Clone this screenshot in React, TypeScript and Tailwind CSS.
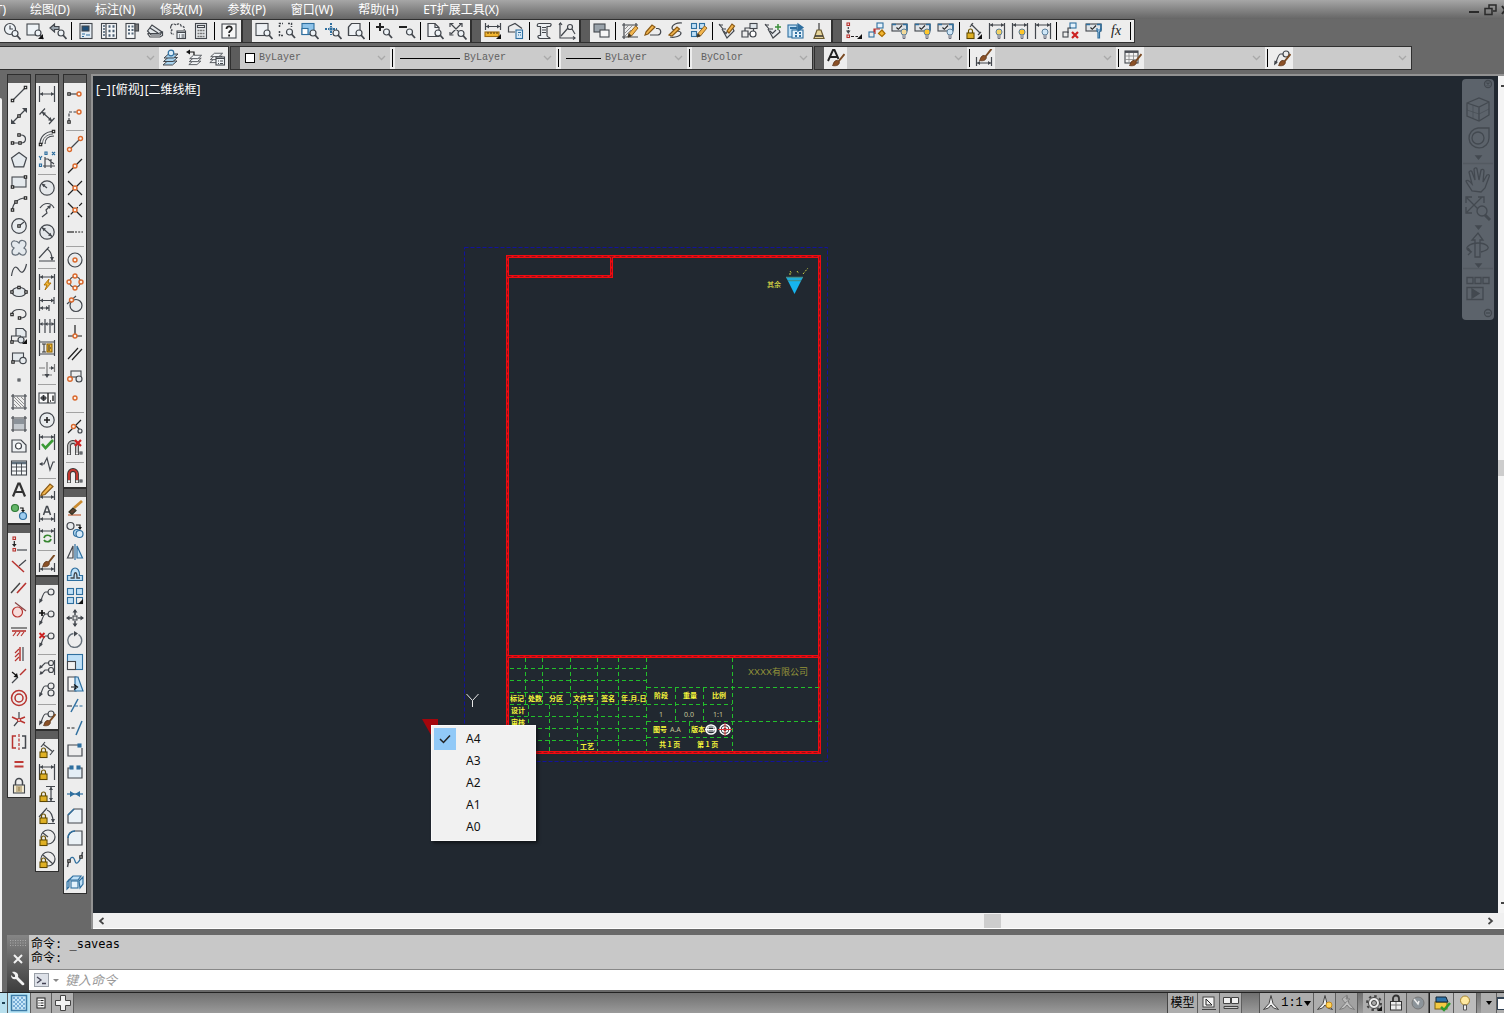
import type { ReactNode } from 'react';

const K = '#43474d';
const B = '#2f6f9f';
const L = '#bfe0f7';
const O = '#d9682c';
const RD = '#b8332f';
const Y = '#f2b632';

type Tone = { s?: string; f?: string; w?: number; dash?: string };

const P = ({ d, s = K, f = 'none', w = 1.2, dash }: Tone & { d: string }) => (
  <path d={d} stroke={s} fill={f} strokeWidth={w} strokeDasharray={dash} />
);
const C = ({ x, y, r, s = K, f = 'none', w = 1.2 }: Tone & { x: number; y: number; r: number }) => (
  <circle cx={x} cy={y} r={r} stroke={s} fill={f} strokeWidth={w} />
);
const R = ({ x, y, w, h, s = K, f = 'none' }: { x: number; y: number; w: number; h: number; s?: string; f?: string }) => (
  <rect x={x} y={y} width={w} height={h} stroke={s} fill={f} strokeWidth={1.1} />
);
const N = ({ x, y }: { x: number; y: number }) => <R x={x - 1.2} y={y - 1.2} w={2.4} h={2.4} s="#222" f="#eee" />;
const Ring = ({ x, y, r = 2 }: { x: number; y: number; r?: number }) => <C x={x} y={y} r={r} s={O} f="#fdeee4" w={1.4} />;
const Mag = ({ x = 12, y = 11 }: { x?: number; y?: number }) => (
  <>
    <C x={x} y={y} r={3} f="#eef3f7" />
    <P d={`M${x + 2} ${y + 2}l3.5 4`} w={1.8} />
  </>
);
const Corner = () => <P d="M17 12v5h-5z" s="none" f="#111" />;
const Pencil = () => (
  <>
    <P d="M7 15l1-3.5L14.5 4l2.5 2-6.5 8z" s="#8a5a16" f="#f3b64e" w={0.9} />
    <P d="M7 15l1-3.5 2.3 2.4z" s="#333" f="#333" w={0.6} />
  </>
);
const Brush = ({ x = 0, y = 0 }: { x?: number; y?: number }) => (
  <g transform={`translate(${x} ${y})`}>
    <P d="M10.5 11.5L16.5 4" s="#7a4a22" w={2} />
    <P d="M4.500 15.500c1-1 .8-4 3.500-5 1.500-.5 3.800.8 3.300 2.500-.8 3-4.500 3-6.800 2.500z" s="#5a3216" f="#8b5127" w={0.8} />
  </g>
);
const Bulb = ({ f = '#cfe6f7', x = 12 }: { f?: string; x?: number }) => (
  <>
    <C x={x} y={10} r={3} s="#5b7f9c" f={f} w={1} />
    <P d={`M${x - 1} 13v3.500h2V13`} s="#556" f="#cdd6dd" w={0.8} />
  </>
);
const Lock = () => (
  <>
    <P d="M3.500 11V9a2 2 0 0 1 4 0v2" s="#6b5200" />
    <R x={2} y={11} w={7} h={5.500} s="#5d4700" f="#f4c52e" />
    <P d="M3 13h5M3 15h5" s="#b98a12" w={0.7} />
  </>
);
const Dim = ({ y = 4 }: { y?: number }) => (
  <>
    <P d={`M1.500 1v16M16.500 1v16M2 ${y}h14`} />
    <P d={`M2 ${y}l3-2v4zM16 ${y}l-3-2v4z`} s="none" f={K} />
  </>
);
const DimLow = () => (
  <>
    <P d="M1.500 8v9M16.500 8v9M2 14h14" />
    <P d="M2 14l3-2v4zM16 14l-3-2v4z" s="none" f={K} />
  </>
);
const Panel = () => (
  <>
    <R x={1} y={2} w={15} h={7} f="#dfe3e7" />
    <P d="M1 2.500h4M12 2.500h4v6" s={B} w={1.500} />
    <P d="M5.500 5.500l1.800 1.800L11 3.500" s="#222" w={1.100} />
  </>
);
const Magnet = ({ c }: { c: string }) => (
  <>
    <P d="M3 16V7a4 4 0 0 1 8 0v9" s="#333" w={3.800} />
    <P d="M3 13V7a4 4 0 0 1 8 0v6" s={c} w={2.200} />
    <P d="M3 15.500v-2.200M11 15.500v-2.200" s="#eee" w={2.200} />
    <R x={14} y={13} w={2} h={2} />
  </>
);
const Leader = () => (
  <>
    <C x={13} y={5} r={3} />
    <P d="M10 5H7.500c-2 0-3 4-5 10" />
    <P d="M1 16.500l.5-5 3.500 1.500z" s="none" f={K} />
  </>
);
const Sheets = ({ c = '#f3f5f7' }: { c?: string }) => (
  <>
    <P d="M1 16l4.500-4H15l-4.500 4z" f={c} w={1} />
    <P d="M1.500 12.500L6 8.500h9.500L11 12.500z" f={c} w={1} />
    <P d="M2 9l4.500-4H16l-4.500 4z" f={c} w={1} />
  </>
);

const icons: Record<string, ReactNode> = {
  'Zoom realtime': <><C x={7} y={7} r={5.500} f="#eef3f7" /><P d="M7 3.500V7H10" /><Mag x={12} y={11.500} /></>,
  'Zoom flyout': <><R x={1} y={2} w={12} h={11} f="#eef3f7" /><Mag /><Corner /></>,
  'Zoom previous': <><P d="M1 6l4.500-4v2.500H10v3H5.500V10z" f="#9aa4ad" /><Mag x={12} y={11} /></>,
  Properties: <><R x={3} y={1.500} w={12} h={15} f="#e4ecf3" /><R x={5} y={4} w={7} h={5} f="#1e4e79" /><P d="M5 12h3M5 14.500h2M9 13h4" s={B} /></>,
  'Design center': <><R x={1.500} y={1.500} w={15} h={15} f="#f5f7f9" /><P d="M6 2v15" /><P d="M3 4h2M3 7h2M3 10h2M3 13h2" w={1.600} s="#4a5f73" /><P d="M8.500 4.500h2M12.500 4.500h2M8.500 9h2M12.500 9h2M8.500 13.500h2M12.500 13.500h2" w={2.400} s="#4a5f73" /></>,
  'Tool palettes': <><R x={3} y={1.500} w={9} h={15} f="#f5f7f9" /><R x={12} y={2} w={3.500} h={7} f="#777" /><P d="M5 4.500h2M8.500 4.500h2M5 8h2M8.500 8h2M5 11.500h2M8.500 11.500h2" w={1.800} s="#56697a" /></>,
  'Sheet set manager': <><P d="M1.500 9L6 3l10 7-2 3H5z" f="#e3e7ea" /><P d="M1.500 11.500h11L16.500 10v3.500L14 15H4l-2.500-3.500M4 6l8 5" /></>,
  'Markup set': <><P d="M2 4c1-3 4-2 5-1 2-2 5-1 5 1 3 0 4 2 3 4M2 4c-1 2 0 3 1 4-2 2-1 5 2 4" dash="2.500 1" /><R x={8} y={9} w={8.500} h={7.500} f="#eef3f7" /><P d="M8 10.500h8.500M10 13h1M12.500 13h3M10 15h1M12.500 15h3" /></>,
  Calculator: <><R x={3.500} y={1.500} w={11} h={15} f="#e4e7ea" /><R x={5.500} y={3.500} w={7} h={2} f="#fff" /><P d="M5.500 8.500h2M8 8.500h2M10.500 8.500h2M5.500 11.500h2M8 11.500h2M10.500 11.500h2M5.500 14.500h2M8 14.500h2M10.500 14.500h2" w={1.600} s="#777" /></>,
  Help: <><R x={2} y={2} w={14} h={14} f="#f7f7f7" /><P d="M6.500 7c0-3.500 5.500-3.500 5.300 0-.2 2-2.700 1.700-2.700 4M9.100 12.500v2" s="#222" w={1.800} /></>,
  'Zoom window': <><R x={1} y={1.500} w={12} h={12} f="#eef1f4" /><Mag /></>,
  'Zoom dynamic': <><P d="M1.500 5V1.500H5M10 1.500h3.500V5M1.500 9v4.500H5" w={1.500} dash="2 1" /><Mag x={11.500} y={10} /></>,
  'Zoom scale': <><R x={1} y={1.500} w={12} h={11} s={B} f="#8fc4ea" /><R x={1} y={6.500} w={6} h={6} s={B} f="#fff" /><Mag /></>,
  'Zoom center': <><P d="M7 1v4M7 9v4M1 7h4M9 7h4" s={B} w={2} dash="2 1" /><R x={6} y={6} w={2} h={2} s={B} f={B} /><Mag x={12} y={11} /></>,
  'Zoom object': <><P d="M1.500 5l3-3.500h8.500v8l-3 4H1.500z" f="#eef1f4" /><P d="M1.500 5v8.500" /><Mag /></>,
  'Zoom in': <><P d="M1 5h8M5 1v8" s="#222" w={2} /><Mag x={11.500} y={10} /></>,
  'Zoom out': <><P d="M1 5h8" s="#222" w={2} /><Mag x={11.500} y={10} /></>,
  'Zoom all': <><P d="M2 1.500h7l4 4v9H2z" f="#f1f3f5" /><P d="M9 1.500v4h4" /><Mag /></>,
  'Zoom extents': <><P d="M2 2l10 10M12 2L2 12M1 5V1.500h3.500M10 1.500h3V5M1 10v3h3.500" /><Mag x={12} y={11.500} /></>,
  Distance: <><P d="M1.500 1v7M16.500 1v7M2 4.500h14" /><P d="M2 4.500l3-2v4zM16 4.500l-3-2v4z" s="none" f={K} /><R x={1} y={10} w={14} h={4.500} s="#9b6a10" f={Y} /><P d="M4 10v2M7 10v2M10 10v2M13 10v2" s="#6b4a0c" /><Corner /></>,
  Area: <><P d="M1.500 4.500L8 1.500l7 5M1.500 4.500V10H8" /><R x={9} y={8} w={6.500} h={8.500} s={B} f="#d9ebf8" /><P d="M11 10.500h3M11 13h1M13 13h1" s={B} /></>,
  List: <><P d="M4 1.500h11c2 0 1 3-.5 3H12v9c0 2 3 1.500 3 3H5c-2 0-3-3-1-3h1.500V4.500H3.500C1.500 4.500 2 1.500 4 1.500z" f="#eceff2" /><P d="M7 5.500h4M7 8h4M7 10.500h4" /></>,
  'Locate point': <><P d="M2 1v15h15" /><P d="M1 3l1.500-2L4 3M15 14.500l2 1.500-2 1.500M3 14l7-8" /><C x={12} y={5} r={2.500} /><P d="M14 7l3 5" /></>,
  'Draw order': <><R x={1} y={2} w={11} h={8} f="#9aa3ab" /><R x={7} y={8} w={9} h={7} f="#f7f7f7" /></>,
  'Edit hatch': <><P d="M3 1v16M1 3h16M1 15h16M15 1v4" /><P d="M4 7l4-4M4 11l8-8M4 14l6-6" w={0.900} s="#888" /><Pencil /></>,
  'Edit polyline': <><P d="M2 10l6-7 3 2-7 7-3 1z" s="#8a5a16" f="#f3b64e" /><P d="M6 13h8a3.300 3.300 0 0 0 0-6.500h-2" /></>,
  'Edit spline': <><P d="M15 1c-5-.5-10 1.500-10 5s9 2 9 5-6 5-11 4" /><P d="M2 13l8-8 2.500 2-7.500 7z" s="#8a5a16" f="#f3b64e" /></>,
  'Edit array': <><R x={1.500} y={1.500} w={5} h={5} s={B} f={L} /><R x={9.500} y={1.500} w={5} h={5} s={B} f={L} /><R x={1.500} y={9.500} w={5} h={5} s={B} f={L} /><Pencil /></>,
  'Edit attribute': <><P d="M1 3h4M4 7l5 9 7-7-2-4" f="#e8ebee" /><P d="M1 2l4 5h3M5.500 9l2.500 2.500L11 7" /><P d="M9 9l5-7 2.500 2-5.500 7z" s="#8a5a16" f="#f3b64e" /></>,
  'Block editor': <><R x={9} y={1.500} w={7} h={5} f="#dfe5ea" /><P d="M1 9h6v6H1zM4 9V6h5" /><C x={12} y={12} r={3} f="#fff" /><P d="M7 12h2M12.500 6.500V9" /></>,
  'Synchronize attributes': <><P d="M1 3h4M4 7l5 9 7-6-1-2" f="#e8ebee" /><P d="M1 2l4 5h4M6 9l2.500 2.500L12 8" /><P d="M14 2v6M11 5h6" s="#3a8f3a" w={1.500} /></>,
  'Data extraction': <><R x={1} y={3} w={9} h={12} s={B} f={L} /><R x={5} y={8} w={11} h={8} s={B} f="#e5f2fc" /><P d="M3 6h7M8 11h2M12 11h2M8 14h2M12 14h2" s={B} w={1.800} /><P d="M11 2l5 3.500-5 3.500z" s={B} f={B} /></>,
  Purge: <><P d="M9 1v7" s="#777" w={1.800} /><P d="M7 8h4l3 8.500H4z" s="#6a5a30" f="#e6d49a" /><P d="M5 14h8" s="#333" w={1.500} /></>,
  'Geometric constraint': <><R x={2} y={1} w={2.500} h={2.500} s={RD} /><P d="M3.300 5v6" dash="2 1" /><P d="M1 8.500h4.500L3.300 12z" s="none" f={K} /><R x={2} y={13} w={2.500} h={2.500} s={RD} /><P d="M6 14.500h7" dash="3 1.500" s="#222" /><Corner /></>,
  'Auto constrain': <><R x={9} y={1} w={6} h={5} s={B} f="#e5f2fc" /><R x={1} y={10} w={5} h={5} s={B} /><P d="M6 10V7h6M7 12V7" s={RD} /><P d="M14 8l3 3.500-3 3-3.500-3z" s="#a86c00" f={Y} /></>,
  'Show geometric': <><Panel /><Bulb f="#f2d99a" x={13} /></>,
  'Show all geometric': <><Panel /><Bulb f="#ffc62b" x={13} /></>,
  'Hide all geometric': <><Panel /><Bulb x={13} /></>,
  'Aligned constraint': <><Lock /><P d="M6 2l9 9M5 5l3-4M13 13l3-3" /><Corner /></>,
  'Show dimensional': <><Dim y={3} /><Bulb f="#f2d264" x={11} /></>,
  'Show all dimensional': <><Dim y={3} /><Bulb f="#ffc62b" x={11} /></>,
  'Hide all dimensional': <><Dim y={3} /><Bulb x={11} /></>,
  'Delete constraints': <><R x={8} y={1} w={6} h={5} s={B} f="#e5f2fc" /><R x={1} y={10} w={5} h={5} /><P d="M6 11V6h3" /><P d="M10 10l6 6M16 10l-6 6" s="#c22" w={2.200} /></>,
  'Constraint settings': <><Panel /><P d="M12 6v3l1 1v6h1.500v-6l1-1V6M12 8h3.500" s={B} f="#e5f2fc" /></>,
  'Parameters manager': <text x="3" y="13" fontSize="14" fontStyle="italic" fontFamily="Liberation Serif, serif" fill="#222">fx</text>,
  'Layer properties': <><Sheets c="#a9d3ee" /><C x={9} y={4} r={2.800} s={B} f="#dceefa" /></>,
  'Layer previous': <><g transform="translate(3 2) scale(.85)"><Sheets /></g><P d="M9 6V3H3" s="#111" /><P d="M1 3l4-2.500v5z" s="none" f="#111" /></>,
  'Layer states': <><g transform="translate(1 0) scale(.85)"><Sheets /></g><R x={8} y={8} w={8.500} h={8} f="#f1f5f8" /><P d="M8 9.500h8.500M10 12h1M12 12h3M10 14.500h1M12 14.500h3" /></>,
  'Text style': <><P d="M1 12L6 1h1.500l4 9M3 8h7" s="#222" w={1.900} /><Brush x={1} y={1} /></>,
  'Dimension style': <><DimLow /><Brush x={0} y={-4} /></>,
  'Table style': <><R x={1} y={2} w={13} h={12} f="#f4f4f4" /><P d="M1 3h13" w={1.800} /><P d="M1 7h13M1 10.500h13M5 4v10M9.500 4v10" w={0.800} s="#888" /><Brush x={1} y={1} /></>,
  'Multileader style': <><Leader /><Brush x={1} y={1} /></>,

  Line: <><P d="M2 16L16 2" /><N x={2.500} y={15.500} /><N x={15.500} y={2.500} /></>,
  'Construction line': <><P d="M2 16L16 2" /><P d="M1 17v-5l5 5zM17 1v5l-5-5z" s="none" f={K} /><N x={9} y={9} /></>,
  Polyline: <><P d="M2 14h9c6 0 6-8 0-8H9" /><N x={2.500} y={14} /><N x={10} y={14} /><N x={9} y={6} /></>,
  Polygon: <P d="M9 1.500l7.500 5.500-2.800 8.800H4.300L1.500 7z" f="#e4e9ed" />,
  Rectangle: <><R x={2} y={4} w={14} h={10} f="#e4e9ed" /><N x={2.500} y={14} /><N x={15.500} y={4} /></>,
  Arc: <><P d="M2.500 15c0-6 5-12 13-12" /><N x={2.500} y={15} /><N x={6} y={7} /><N x={15.500} y={3} /></>,
  Circle: <><C x={9} y={9} r={7.300} f="#e8ecef" /><P d="M9 9l5-4" /><N x={9} y={9} /></>,
  'Revision cloud': <P d="M9 4c1-4 7-3 7 1 0 2-1 3-2 4 4 2 2 8-2 7-1 0-2-1-3-2-1 3-7 3-7-1 0-2 1-3 2-4C0 7 1 1 5 2c2 0 3 1 4 2z" f="#e4e9ed" s="#66707a" />,
  Spline: <P d="M1.500 15C3 5 6 4 9 9s6 1 7.500-6" />,
  Ellipse: <><ellipse cx="9" cy="9" rx="7" ry="4.500" stroke={K} fill="#e4e9ed" strokeWidth="1.200" /><N x={2} y={9} /><N x={16} y={9} /><N x={9} y={4.500} /></>,
  'Elliptical arc': <><P d="M2 9c1-6 14-6 14 0 0 3-3 4-6 4" /><N x={2} y={9.500} /><N x={9.500} y={13} /></>,
  'Insert block': <><P d="M6 1.500h7l3 3V10H6z" f="#e4e9ed" /><R x={1.500} y={9} w={9} h={5} f="#eee" /><C x={11} y={13} r={3} f="#dfe5ea" /><N x={2} y={15} /><Corner /></>,
  'Make block': <><R x={2.500} y={4} w={11} h={8} f="#e4e9ed" /><C x={13} y={11.500} r={3.200} f="#e8ecef" /><N x={3} y={13} /></>,
  Point: <R x={8} y={8} w={2} h={2} />,
  Hatch: <><P d="M3 1v16M15 1v16M1 3h16M1 15h16" /><P d="M4 7l7 7M4 4l10 10M7 4l7 7M11 4l3 3M4 11l3 3" w={0.800} s="#777" /></>,
  Gradient: <><P d="M4 4h10v5H4z" s="none" f="#8b9299" /><P d="M4 9h10v5H4z" s="none" f="#c4c9ce" /><P d="M3 1v16M15 1v16M1 3h16M1 15h16" /></>,
  Region: <><P d="M2 3h9l5 5v7H2z" f="#eef1f3" /><C x={8.500} y={9} r={3} f="#fff" /></>,
  Table: <><R x={1.500} y={2} w={15} h={14} f="#f6f8f9" /><P d="M2 4h14" w={2.500} s="#60707d" /><P d="M2 8h14M2 12h14M6.500 4v12M11.500 4v12" w={0.900} /></>,
  'Multiline text': <P d="M3 15.500L8.300 2.500h1.400L15 15.500M5 11h8" s="#333" w={2.200} />,
  'Add selected': <><C x={5} y={5} r={3.500} s="#2f7a35" f="#63b568" /><C x={13} y={13} r={3.500} s={B} f="#9fcdf0" /><P d="M10 5h3v3" s="#111" /><P d="M11 7h4l-2 2.500z" s="none" f="#111" /></>,
  Coincident: <><R x={3} y={2} w={2.500} h={2.500} s={RD} /><P d="M4.300 6v4" s="#222" /><P d="M2 9h4.600L4.300 12z" s="none" f="#222" /><R x={3} y={13.500} w={2.500} h={2.500} s={RD} /><P d="M7 15h10" /></>,
  Perpendicular: <><P d="M9 9l7-6" /><P d="M2 4l12 11" s={RD} w={1.500} /></>,
  Parallel: <><P d="M1 14L10 4" s="#444" w={1.400} /><P d="M7 14L16 4" s={RD} w={1.600} /></>,
  Tangent: <><C x={7.500} y={11} r={5} s={RD} f="#f7dcda" /><P d="M5 1.500L16 10" s="#844" /></>,
  Horizontal: <><P d="M1 5h16" s="#444" /><P d="M2 8h14" s={RD} w={1.600} /><P d="M6 9l-3 4M10 9l-3 4M14 9l-3 4" s={RD} /></>,
  Vertical: <><P d="M13 2v14" /><P d="M10 2v14" s={RD} w={1.500} /><P d="M9 4L5 8M9 8l-4 4M9 12l-4 4" s={RD} /></>,
  Collinear: <><P d="M10 8l6-6" s={RD} w={1.500} /><P d="M2 16l6-6" /><P d="M2 5l5 4" s="#111" /><P d="M8 10.500L3.500 10 7 6z" s="none" f="#111" /></>,
  Concentric: <><C x={9} y={9} r={7.500} s={RD} w={1.500} /><C x={9} y={9} r={4} s={RD} w={1.500} /></>,
  Fix: <><P d="M9 1v8M9 9l-5 6" /><P d="M2 6l13 6M10 8l5-2" s={RD} w={1.400} /><C x={9} y={9} r={1.500} s={RD} f="#fff" /></>,
  Symmetric: <><P d="M6 3H2.500v12H6" s={RD} w={1.500} /><P d="M9 1v16" s={RD} dash="3 1.500" /><P d="M12 3h3.500v12H12" w={1.500} /></>,
  Equal: <P d="M4.500 7h9M4.500 11.500h9" s="#bf3a36" w={2.200} />,
  'Fix lock': <><P d="M5.500 8V5a3.500 3.500 0 0 1 7 0v3" w={1.500} /><R x={3.500} y={8} w={11} h={8} f="#f3ead0" /><P d="M6 10h6M6 12h6M6 14h6M9 10v4" s="#8d7540" w={0.900} /></>,

  'Linear dimension': <Dim y={9} />,
  'Aligned dimension': <><P d="M4 5l10 9M1.500 7.500L7 1.500M11 17l5.500-6" /><P d="M4 5l4 .8L5.500 9zM14 14l-4-.8L12.500 10z" s="none" f={K} /></>,
  'Arc length': <><P d="M2 15C2 8 7 2.500 15 2.500M7 15c0-5 3-8 9-8" /><P d="M4.500 15c0-6 4-9.500 10.500-10" w={0.800} /><N x={2.500} y={15.500} /><N x={15.500} y={2.500} /></>,
  Ordinate: <><P d="M1 5l1.500 2L4 5M2.500 7v2M7 1h2v2.500H7zM14 1l3 3M17 1l-3 3M1.500 13h2v2.500h-2z" s={B} w={1.200} /><P d="M7 6v11M5 15h12M7 8h3l6 5M13 8v9" /></>,
  Radius: <><C x={9} y={9} r={7.200} f="#e4e7ea" /><P d="M4 5l5 4" /><P d="M3.500 4.500l4 1-2 2.700z" s="none" f={K} /></>,
  Jogged: <><P d="M2 7c4-6 11-6 14 0" /><P d="M4 16l5-4-1-3 4-4" /><P d="M13 4l-1 4-3-2.500z" s="none" f={K} /></>,
  Diameter: <><C x={9} y={9} r={7.200} f="#e4e7ea" /><P d="M4 4.500l10 9" /><P d="M4 4.500l4 1-2.500 2.700zM14 13.500l-4-1 2.500-2.700z" s="none" f={K} /></>,
  Angular: <><P d="M1 16h16M1 13L11 2M9 4c4 2 5 6 5 11" /><P d="M14 16l-2-4h4z" s="none" f={K} /></>,
  'Quick dimension': <><Dim y={4} /><P d="M11 6l-5 6h3l-2 5 6-7h-3z" s="#a86c00" f={Y} w={0.900} /></>,
  Baseline: <><P d="M1.500 2v14M16 2v7M11 10v6M2 5.500h14M2 13h9" /><P d="M2 5.500l3-2v4zM2 13l3-2v4zM16 5.500l-3-2v4zM11 13l-3-2v4z" s="none" f={K} /></>,
  Continue: <><P d="M1.500 2v14M7 2v14M12 2v14M16.500 2v14M2 7h14" /><P d="M2 7l2.500-2v4zM7 7l2.500-2v4zM16 7l-2.500-2v4z" s="none" f={K} /></>,
  'Dimension space': <><P d="M1.500 1v16M16.500 1v16M2 3h14M2 15h14" /><R x={9} y={5} w={5} h={8} s="#8d6200" f={Y} /><P d="M6 5v8M4 5h4M4 13h4M10 7h2M10 9h3M10 11h2" s="#333" w={1} /></>,
  'Dimension break': <><P d="M1 7h6M11 7h5M16.500 3v8M9 1v12M4 14h10" s="#777" /><P d="M9 17l-2.500-4h5zM16 7l-3-2v4z" s="none" f={K} /></>,
  Tolerance: <><R x={1} y={4} w={16} h={10} f="#fafafa" /><P d="M10 4v10M5.500 6v6M2.500 9h6M12 12h1M15 6.500V12" w={1.400} s="#222" /><C x={5.500} y={9} r={2} /></>,
  'Center mark': <><C x={9} y={9} r={7.200} f="#e8ebed" /><P d="M6 9h6M9 6v6" w={1.600} s="#222" /></>,
  Inspection: <><Dim y={4} /><P d="M4 11l3.500 4L15 7" s="#3a9a35" w={2.600} /></>,
  'Jogged linear': <><P d="M2 9h4l3-6 3 12 3-8 2 0" /><P d="M1 9l3.500-2v4z" s="none" f={K} /></>,
  'Dimension edit': <><DimLow /><P d="M4 10l8-9 3 2.500-8 8-4 1z" s="#8a5a16" f="#f3b64e" /></>,
  'Dimension text edit': <><DimLow /><P d="M5.500 10l3-8.500h1l3 8.500M6.500 7h5" w={1.500} /></>,
  'Dimension update': <><Dim y={4} /><P d="M6 11c1-4 6-3 7-1M13 12c-1 4-6 3-7 1" s="#35852e" w={1.700} /></>,
  'Dimension style manager': <><DimLow /><Brush y={-4} /></>,
  Multileader: <Leader />,
  'Add leader': <><Leader /><P d="M1 4h6M4 1v6" s="#111" w={1.700} /></>,
  'Remove leader': <><Leader /><P d="M1.500 2l5 5M6.500 2l-5 5" s="#c22" w={1.900} /></>,
  'Align leaders': <><C x={13} y={4} r={2.500} /><C x={13} y={11} r={2.500} /><P d="M16.500 1v15M10.500 4H7l-5 5M10.500 11H7l-4 4" /><P d="M1 10l1-4 3 2zM1.500 16l1-4 3 2z" s="none" f={K} /></>,
  'Collect leaders': <><C x={13} y={5} r={3} /><C x={13} y={12} r={3} /><P d="M10 5H7c-2 0-3 5-5 10" /><P d="M1 16l.5-5 3.500 2z" s="none" f={K} /></>,
  'Leader style': <><Leader /><Brush x={1} y={1} /></>,
  'Aligned lock': <><Lock /><P d="M5 3l10 8M3 6l4-5M12 14l4-5" /></>,
  'Horizontal lock': <><P d="M1.500 1v16M16.500 1v16M2 4h14" /><P d="M2 4l3-2v4zM16 4l-3-2v4z" s="none" f={K} /><Lock /></>,
  'Vertical lock': <><P d="M8 1.500h9M8 16.500h9M13 2v14" /><P d="M13 2l-2 3h4zM13 16l-2-3h4z" s="none" f={K} /><Lock /></>,
  'Angular lock': <><P d="M1 10l8-9M9 3c5 2 6 8 6 12M10 16.500h7" /><P d="M15 16l-2-4h4z" s="none" f={K} /><Lock /></>,
  'Radius lock': <><C x={10} y={8} r={7} /><P d="M5 4l5 4" /><Lock /></>,
  'Diameter lock': <><C x={10} y={8} r={7} /><P d="M5 4l10 9" /><Lock /></>,

  'Temporary tracking': <><P d="M3 9h8" /><N x={3} y={9} /><Ring x={13} y={9} /></>,
  'Snap from': <><P d="M3 14V5h8" dash="3 1.500" /><N x={3} y={15} /><Ring x={13} y={5} /></>,
  Endpoint: <><P d="M4 14L14 4" /><Ring x={3.500} y={14.500} /><Ring x={14.500} y={3.500} /></>,
  Midpoint: <><P d="M2 16L16 2" s="#222" /><Ring x={9} y={9} /></>,
  Intersection: <><P d="M2 2l14 14M16 2L2 16" s="#222" /><Ring x={9} y={9} /></>,
  'Apparent intersection': <><P d="M2 2l14 14" s="#222" /><P d="M16 2L2 16" s="#222" dash="4 2" /><Ring x={9} y={9} /></>,
  Extension: <><P d="M1 9h7" s="#222" /><P d="M9 9h8" s="#222" dash="2 1.200" /></>,
  Center: <><C x={9} y={9} r={7} f="#e8ebed" /><Ring x={9} y={9} /></>,
  Quadrant: <><C x={9} y={9} r={5.500} f="#e8ebed" /><Ring x={9} y={3} /><Ring x={9} y={15} /><Ring x={3} y={9} /><Ring x={15} y={9} /></>,
  'Tangent snap': <><C x={10} y={10.500} r={6} f="#e8ebed" /><P d="M1 9l9-8" /><Ring x={5.500} y={5} /></>,
  'Perpendicular snap': <><P d="M2 13h14M9 2v11" s="#222" /><Ring x={9} y={13} /></>,
  'Parallel snap': <P d="M2 14L12 3M6 15L16 4" s="#222" />,
  Insertion: <><R x={5} y={4} w={10} h={6} /><Ring x={4} y={12} r={2.300} /><C x={13} y={12} r={3} f="#e4e7ea" /></>,
  Node: <Ring x={9} y={9} />,
  Nearest: <><P d="M2 16L15 3M10 9l5 5" s="#222" /><Ring x={7.500} y={9.500} /><C x={14} y={14} r={2} f="#eee" /></>,
  'No snap': <><Magnet c="#bbb" /><P d="M9 1l6 6M15 1L9 7" s="#c22" w={2.200} /></>,
  'Snap settings': <Magnet c="#c3372f" />,
  Erase: <><P d="M2 16h13" s="#c56a45" w={1.300} /><P d="M8 9l8-7" s="#c98a2f" w={2.800} /><P d="M3 13l4-4 3 2.500-4 4z" s="#332" f="#5d4030" /></>,
  Copy: <><C x={4.500} y={5} r={3.500} f="#e8ebed" /><C x={11} y={12} r={3.500} s={B} f={L} /><C x={13.500} y={13} r={3.500} s={B} f="#d7ebfa" /><P d="M10 4h4v3" s="#111" /><P d="M12 6h4l-2 3z" s="none" f="#111" /></>,
  Mirror: <><P d="M7 3v12H1.500z" f="#eee" /><P d="M11 3v12h5.500z" s={B} f={L} /><P d="M9 1v16" s={B} /></>,
  Offset: <><P d="M1.500 15.500v-5H5c-1-10 9-10 8.500 0h3v5z" s={B} f={L} /><P d="M4.500 13h3.500c0-7 3-7 3 0h3" w={1.400} /></>,
  Array: <><R x={1.500} y={1.500} w={6} h={6} s={B} f={L} /><R x={10.500} y={1.500} w={6} h={6} s={B} f={L} /><R x={1.500} y={10.500} w={6} h={6} s={B} f={L} /><R x={10.500} y={10.500} w={6} h={6} s={B} /><Corner /></>,
  Move: <><R x={7} y={7} w={4} h={4} f="#ddd" /><P d="M9 1v5M9 12v5M1 9h5M12 9h5" w={1.500} /><P d="M9 0L6.500 3.500h5zM9 18l-2.500-3.500h5zM0 9l3.500-2.500v5zM18 9l-3.500-2.500v5z" s="none" f={K} /></>,
  Rotate: <><P d="M12.500 3.500a7 7 0 1 1-5-1" w={1.400} s="#66707a" /><P d="M8 0l4 2.500-4 3z" s="none" f={K} /></>,
  Scale: <><R x={1.500} y={1.500} w={15} h={15} s={B} f={L} /><R x={1.500} y={8.500} w={8} h={8} f="#f2f2f2" /></>,
  Stretch: <><P d="M2 2h8v14H2z" f="#f4f4f4" /><P d="M9 2h3l5 14H9z" s={B} f={L} /><P d="M5 12h5M8 9.500l3.500 2.500L8 14.500" s="#111" /></>,
  Trim: <><P d="M1 9h5" s={K} /><P d="M9 9h8" s={B} dash="3 1.500" /><P d="M5 15l7-13" s={B} w={1.500} /></>,
  Extend: <><P d="M1 9h9" s="#222" dash="3 1.500" /><P d="M10 16l6-14" s={B} w={1.500} /></>,
  'Break at point': <><P d="M12 4H2v11h14V7" /><R x={12} y={3} w={3} h={3} s={B} f={B} /></>,
  Break: <><P d="M4 5H2v10h14V5h-2" f="#e4eef6" /><R x={4} y={3} w={3} h={3} s={B} f={B} /><R x={11} y={3} w={3} h={3} s={B} f={B} /></>,
  Join: <><P d="M1 9h16" s={B} /><P d="M4 6l5 3-5 3zM14 6L9 9l5 3z" s="none" f={B} /></>,
  Chamfer: <><P d="M8 2h8v14H2V8z" f="#eaf1f6" /><P d="M2 8l6-6" s={B} w={1.500} /></>,
  Fillet: <><P d="M9 2h7v14H2V9c0-4 3-7 7-7z" f="#eaf1f6" /><P d="M2 9c0-4 3-7 7-7" s={B} w={1.500} /></>,
  Blend: <><P d="M3 11c2-7 5-5 6-1s4 2 6-4" s={B} /><P d="M1.500 16l1-5M15.500 6l1-5" w={1.400} /><N x={3} y={10} /><N x={15} y={6} /></>,
  Explode: <><P d="M3 7l4-4h8l-3 4zM13 8l4-4v7l-3 4z" s={B} f={L} /><R x={5} y={8} w={7} h={7} s={B} f="#e5f2fc" /><P d="M1 9l2-2v7l-2 2z" s={B} f={L} /></>,
};

const topBars: string[][] = [
  ['Zoom realtime', 'Zoom flyout', 'Zoom previous', '|', 'Properties', 'Design center', 'Tool palettes', 'Sheet set manager', 'Markup set', 'Calculator', '|', 'Help'],
  ['Zoom window', 'Zoom dynamic', 'Zoom scale', 'Zoom center', 'Zoom object', '|', 'Zoom in', 'Zoom out', '|', 'Zoom all', 'Zoom extents'],
  ['Distance', 'Area', '|', 'List', 'Locate point'],
  ['Draw order', '|', 'Edit hatch', 'Edit polyline', 'Edit spline', 'Edit array', '|', 'Edit attribute', 'Block editor', 'Synchronize attributes', 'Data extraction', 'Purge'],
  ['Geometric constraint', 'Auto constrain', 'Show geometric', 'Show all geometric', 'Hide all geometric', '|', 'Aligned constraint', 'Show dimensional', 'Show all dimensional', 'Hide all dimensional', '|', 'Delete constraints', 'Constraint settings', 'Parameters manager', '|'],
];

const palettes: string[][][] = [
  [
    ['Line', 'Construction line', 'Polyline', 'Polygon', 'Rectangle', 'Arc', 'Circle', 'Revision cloud', 'Spline', 'Ellipse', 'Elliptical arc', 'Insert block', 'Make block', 'Point', 'Hatch', 'Gradient', 'Region', 'Table', 'Multiline text', 'Add selected'],
    ['Coincident', 'Perpendicular', 'Parallel', 'Tangent', 'Horizontal', 'Vertical', 'Collinear', 'Concentric', 'Fix', 'Symmetric', 'Equal', 'Fix lock'],
  ],
  [
    ['Linear dimension', 'Aligned dimension', 'Arc length', 'Ordinate', '|', 'Radius', 'Jogged', 'Diameter', 'Angular', '|', 'Quick dimension', 'Baseline', 'Continue', 'Dimension space', 'Dimension break', '|', 'Tolerance', 'Center mark', 'Inspection', 'Jogged linear', '|', 'Dimension edit', 'Dimension text edit', 'Dimension update', '|', 'Dimension style manager'],
    ['Multileader', 'Add leader', 'Remove leader', '|', 'Align leaders', 'Collect leaders', '|', 'Leader style'],
    ['Aligned lock', 'Horizontal lock', 'Vertical lock', 'Angular lock', 'Radius lock', 'Diameter lock'],
  ],
  [
    ['Temporary tracking', 'Snap from', '|', 'Endpoint', 'Midpoint', 'Intersection', 'Apparent intersection', 'Extension', '|', 'Center', 'Quadrant', 'Tangent snap', '|', 'Perpendicular snap', 'Parallel snap', 'Insertion', 'Node', '|', 'Nearest', 'No snap', '|', 'Snap settings'],
    ['Erase', 'Copy', 'Mirror', 'Offset', 'Array', 'Move', 'Rotate', 'Scale', 'Stretch', 'Trim', 'Extend', 'Break at point', 'Break', 'Join', 'Chamfer', 'Fillet', 'Blend', 'Explode'],
  ],
];

const Tool = ({ name }: { name: string }) => (
  <button type="button" aria-label={name} className="flex h-[22px] w-[23px] max-w-full shrink-0 items-center justify-center">
    <svg width="18" height="18" viewBox="0 0 18 18" aria-hidden="true">{icons[name]}</svg>
  </button>
);

const VSep = () => (
  <span className="flex w-[5px] shrink-0 justify-center">
    <span className="h-[18px] w-px self-center bg-black" />
  </span>
);

const Grip = () => <span className="w-[9px] shrink-0 bg-[#5c5c5c]" />;

function TopBar({ items, grip }: { items: string[]; grip: boolean }) {
  return (
    <div role="toolbar" className={grip ? 'flex shrink-0 border border-[#303030] bg-[#ededed] pr-px' : 'flex shrink-0 border border-l-0 border-[#303030] bg-[#ededed] pr-px'}>
      {grip && <Grip />}
      {items.map((n, i) => (n === '|' ? <VSep key={i} /> : <Tool key={i} name={n} />))}
    </div>
  );
}

function Palette({ items }: { items: string[] }) {
  return (
    <div role="toolbar" className="flex flex-col border border-[#2e2e2e] bg-[#ededed]">
      <span className="h-2 bg-[#5c5c5c]" />
      {items.map((n, i) =>
        n === '|' ? (
          <span key={i} className="flex h-[6px] items-center px-[2px]">
            <span className="h-px w-full bg-[#a2a2a2]" />
          </span>
        ) : (
          <Tool key={i} name={n} />
        ),
      )}
    </div>
  );
}

function Combo({ label, text, box, pad, swatch }: { label: string; text: string; box: string; pad: string; swatch?: ReactNode }) {
  return (
    <div className={`relative flex h-[22px] shrink-0 items-center bg-[#cbcbcb] ${box}`}>
      <span className="pointer-events-none absolute left-[5px] flex items-center">{swatch}</span>
      <select aria-label={label} className={`h-full w-full appearance-none bg-transparent font-['Liberation_Mono',monospace] text-[10px] text-[#606060] ${pad}`}>
        <option>{text}</option>
      </select>
      <svg className="pointer-events-none absolute right-1" width="9" height="6" viewBox="0 0 9 6" aria-hidden="true">
        <path d="M1 1l3.500 3.500L8 1" fill="none" stroke="#a9a9a9" strokeWidth="1.300" />
      </svg>
    </div>
  );
}

const menus = ['绘图(D)', '标注(N)', '修改(M)', '参数(P)', '窗口(W)', '帮助(H)', 'ET扩展工具(X)'];

const green = [
  'M510 668.500H646M510 680.500H646M510 692.500H646M510 704.500H646M510 716.500H646M510 728.500H646M510 740.500H646',
  'M525.500 658V704M542.500 658V704M570.500 658V704M597.500 658V751M618.500 658V751M646.500 658V751',
  'M528.500 705V751M549.500 705V751M577.500 705V751',
  'M647 687.500H819M647 704.500H732M647 721.500H819M647 737.500H732',
  'M675.500 688V721M703.500 688V721M689.500 722V737M732.500 658V751',
];

const labels: [number, number, string][] = [
  [510, 701, '标记'], [528, 701, '处数'], [549, 701, '分区'], [573, 701, '文件号'], [601, 701, '签名'], [621, 701, '年.月.日'],
  [511, 713, '设计'], [511, 725, '审核'], [580, 749, '工艺'],
  [654, 698, '阶段'], [683, 698, '重量'], [712, 698, '比例'],
  [653, 732, '图号'], [691, 732, '版本'],
  [659, 747, '共 1 页'], [697, 747, '第 1 页'],
];

const Drawing = () => (
  <svg className="absolute left-[327px] top-[164px]" width="420" height="530" viewBox="420 240 420 530" role="img" aria-label="A4 图框">
    <rect x="464.500" y="247.500" width="363" height="514" fill="none" stroke="#12129c" strokeDasharray="4 2" />
    <g fill="none" stroke="#f00a10" strokeWidth="3">
      <path d="M507.500 256.500H819.500V752.500H507.500zM507.500 656.500H819.500M507.500 276.500H611.500V256.500" />
    </g>
    <path d="M507.500 256.500H819.500V752.500H507.500zM507.500 656.500H819.500M507.500 276.500H611.500V256.500" fill="none" stroke="#8d1218" strokeDasharray="4 2" />
    <g fill="none" stroke="#22c02b" strokeDasharray="4 3">
      {green.map((d) => <path key={d} d={d} />)}
    </g>
    <g fill="#f5f53a" fontSize="7" fontWeight="bold" fontFamily="'Noto Sans CJK SC', sans-serif">
      {labels.map(([x, y, t]) => <text key={`${x}-${y}`} x={x} y={y}>{t}</text>)}
    </g>
    <g fill="#c5c59a" fontSize="7" fontFamily="'Noto Sans', sans-serif">
      <text x="659" y="717">1</text>
      <text x="684" y="717">0.0</text>
      <text x="713" y="717">1:1</text>
      <text x="670" y="732">A.A</text>
    </g>
    <g fill="none" stroke="#fff" strokeWidth="1.600">
      <ellipse cx="711" cy="729.500" rx="5" ry="4.500" />
      <path d="M705 729.500h11M708 727h6v4h-6z" strokeWidth="1.200" />
      <circle cx="725" cy="729.500" r="5" />
      <circle cx="725" cy="729.500" r="2.500" />
      <path d="M718 729.500h14M725 723v13" stroke="#d33" strokeWidth="1" />
    </g>
    <text x="748" y="675" fill="#94943a" fontSize="9" fontFamily="'Liberation Sans Narrow', 'Liberation Sans', 'Noto Sans CJK SC', sans-serif">XXXX有限公司</text>
    <text x="767" y="287" fill="#f0f04a" fontSize="7" fontFamily="'Noto Sans CJK SC', sans-serif">其余</text>
    <path d="M786 277h17l-8.500 17z" fill="#16b4ee" />
    <path d="M786 277.500h17M788 280.500h13" stroke="#3f8f8f" strokeWidth="1.500" />
    <path d="M790 271l2 3M797 271l2 3M789 274h2M803 274l5-6" stroke="#c9cf45" fill="none" strokeDasharray="2 1.500" />
    <path d="M466.500 694l6 6.500 6-6.500M472.500 700.500V707" stroke="#e8e8e8" fill="none" />
    <path d="M422 719h16v8l-7 8z" fill="#a3060c" />
  </svg>
);

const NavBar = () => (
  <div className="absolute right-1 top-[3px] h-[241px] w-8 rounded bg-[#5c636b]">
    <svg width="32" height="241" viewBox="0 0 32 241" fill="none" stroke="#434950" strokeWidth="1.300" role="img" aria-label="导航栏">
      <path d="M1 84.500h30M1 189.500h30" stroke="#535a61" />
      <circle cx="26" cy="5" r="3.500" /><path d="M24.500 3.500l3 3M27.500 3.500l-3 3" />
      <path d="M5 24l12-5 10 4v13l-10 6-12-5zM5 24l12 4 10-5M17 28v14" /><path d="M5 31l12 4 10-5M11 26v13" strokeWidth="0.600" />
      <path d="M27 49H16a10 10 0 1 0 11 10z" /><circle cx="16" cy="59" r="6" />
      <path d="M14 77l5 0-2.500 3zM14 147l5 0-2.500 3zM14 185l5 0-2.500 3z" fill="#434950" />
      <path d="M10 112c-2-4-5-7-6-10 2-2 5 2 6 3L7 93c1-2 3-1 3 0l3 8-1-11c1-2 3-1 3 0l2 11 2-10c1-1 3-1 3 1l-1 11 4-7c2-1 3 0 2 2l-4 11-4 4z" />
      <path d="M5 119l16 16M20 118L5 133M4 124v-6h6M16 118h6v6M4 128v6h6" /><circle cx="20" cy="132" r="5" fill="#5c636b" /><path d="M23 136l5 5" strokeWidth="3" />
      <path d="M13 178v-17h-3l6-7 5 7h-3v17z" /><path d="M10 173c-12-4 0-9 6-9s18 5 3 9M6 169l3 4-3 3" />
      <path d="M5 198.500h6v6H5zM13 198.500h6v6h-6zM21 198.500h6v6h-6zM5 208.500h16v12H5z" /><path d="M10 210l7 4.500-7 4.500z" fill="#434950" />
      <circle cx="26" cy="234" r="3.500" /><path d="M24 234h4" />
    </svg>
  </div>
);

const StatusButton = ({ label, box, children }: { label: string; box: string; children: ReactNode }) => (
  <button type="button" aria-label={label} className={`flex h-full shrink-0 items-center justify-center border-r border-[#5e5e5e] ${box}`}>
    {children}
  </button>
);

const Glyph = ({ children }: { children: ReactNode }) => (
  <svg width="18" height="18" viewBox="0 0 18 18" aria-hidden="true">{children}</svg>
);

const Scale = () => <path d="M9 1.500l2 8 5.500 6-5-1.500L9 11l-2.500 3-5 1.500L7 9.500z" fill="#ededed" stroke="#444" />;

export default function App() {
  return (
    <div className="flex h-screen flex-col overflow-hidden bg-[#696969] font-['Noto_Sans','Noto_Sans_CJK_SC',sans-serif] text-xs">
      <nav className="flex h-[19px] shrink-0 items-center gap-[25px] bg-linear-to-b from-[#a6a6a6] to-[#666] leading-4 text-white">
        <button type="button" aria-label="格式" className="-mr-px flex w-[6px] justify-end overflow-hidden whitespace-nowrap">T)</button>
        {menus.map((m) => <button key={m} type="button" className="whitespace-nowrap">{m}</button>)}
        <div className="ml-auto flex">
          <button type="button" aria-label="窗口控制">
            <svg width="36" height="16" viewBox="0 0 36 16" fill="none" stroke="#2a2a2a" strokeWidth="2" aria-hidden="true">
              <path d="M1 10h10" /><path d="M21 6V3h7v6h-3M17 6.500h7v6h-7z" strokeWidth="1.500" /><path d="M34 4l6 8M34 12l6-8" />
            </svg>
          </button>
        </div>
      </nav>

      <div className="flex h-6 shrink-0">
        {topBars.map((b, i) => <TopBar key={i} items={b} grip={i > 0} />)}
      </div>

      <div className="mt-[3px] flex h-6 shrink-0 gap-px">
        <div className="flex border border-l-0 border-[#303030] bg-[#ededed]">
          <Combo label="图层" text="" box="w-[159px]" pad="" />
          <Tool name="Layer properties" /><Tool name="Layer previous" /><Tool name="Layer states" />
        </div>
        <div className="flex border border-[#303030] bg-[#ededed]">
          <Grip />
          <Combo label="颜色" text="ByLayer" box="w-[150px]" pad="pl-[19px]" swatch={<span className="size-[10px] border border-black bg-white" />} />
          <VSep />
          <Combo label="线型" text="ByLayer" box="w-[161px]" pad="pl-[69px]" swatch={<span className="h-px w-[60px] bg-black" />} />
          <VSep />
          <Combo label="线宽" text="ByLayer" box="w-[126px]" pad="pl-[44px]" swatch={<span className="h-px w-[35px] bg-black" />} />
          <VSep />
          <Combo label="打印样式" text="ByColor" box="w-[120px]" pad="pl-[9px]" />
        </div>
        <div className="flex border border-[#303030] bg-[#ededed]">
          <Grip />
          <Tool name="Text style" />
          <Combo label="文字样式" text="" box="w-[120px]" pad="" />
          <VSep /><Tool name="Dimension style" />
          <Combo label="标注样式" text="" box="w-[121px]" pad="" />
          <VSep /><Tool name="Table style" />
          <Combo label="表格样式" text="" box="w-[121px]" pad="" />
          <VSep /><Tool name="Multileader style" />
          <Combo label="多重引线样式" text="" box="w-[118px]" pad="" />
        </div>
      </div>

      <main className="mt-1 flex min-h-0 flex-1">
        <div className="mt-6 w-[2px] shrink-0 rounded-tr bg-[#f2f2f2]" />
        <div className="ml-[5px] flex shrink-0 items-start gap-1">
          {palettes.map((col, i) => (
            <div key={i} className="flex w-6 flex-col">
              {col.map((items, j) => <Palette key={j} items={items} />)}
            </div>
          ))}
        </div>
        <section className="mb-[6px] ml-1 flex min-w-0 flex-1 border-l-2 border-t-2 border-[#929292]">
          <div className="flex min-w-0 flex-1 flex-col">
            <div className="flex min-h-0 flex-1">
              <div className="relative min-w-0 flex-1 overflow-hidden bg-[#212830]">
                <div className="absolute left-[3px] top-[6px] flex gap-px whitespace-nowrap leading-4 text-white">
                  <button type="button">[−]</button><button type="button">[俯视]</button><button type="button">[二维线框]</button>
                </div>
                <Drawing />
                <NavBar />
                <ul role="menu" className="absolute left-[338px] top-[649px] w-[105px] border border-[#fafafa] bg-[#f1f1f1] py-[2px] leading-[22px] text-[#111] shadow-[2px_2px_3px_rgba(0,0,0,0.5)]">
                  {['A4', 'A3', 'A2', 'A1', 'A0'].map((size, i) => (
                    <li key={size} role="none">
                      <button type="button" role="menuitemradio" aria-checked={i === 0} className="flex h-[22px] w-full items-center pl-[2px]">
                        <span className={i === 0 ? 'flex size-[22px] items-center justify-center bg-[#91c9f7]' : 'size-[22px]'}>
                          {i === 0 && <svg width="12" height="10" viewBox="0 0 12 10" aria-hidden="true"><path d="M1 5l3.500 3.500L11 1.500" fill="none" stroke="#222" strokeWidth="1.500" /></svg>}
                        </span>
                        <span className="pl-[10px]">{size}</span>
                      </button>
                    </li>
                  ))}
                </ul>
              </div>
              <div className="flex w-[6px] flex-col items-end bg-[#f4f4f4] py-[9px]">
                <span className="h-[2px] w-[3px] bg-[#444]" />
                <span className="basis-[373px]" />
                <span className="h-4 w-[6px] shrink-0 bg-[#cdcdcd]" />
                <span className="mt-auto h-[2px] w-[3px] bg-[#444]" />
              </div>
            </div>
            <div className="flex h-4 shrink-0 items-center justify-between border-b border-white bg-[#f0f0f0] px-[5px]">
              <button type="button" aria-label="向左滚动"><svg width="7" height="8" viewBox="0 0 7 8" aria-hidden="true"><path d="M5.500 1l-3.500 3 3.500 3" fill="none" stroke="#444" strokeWidth="1.700" /></svg></button>
              <span className="ml-auto mr-[486px] h-[14px] w-[17px] bg-[#cdcdcd]" />
              <button type="button" aria-label="向右滚动" className="mr-[5px]"><svg width="7" height="8" viewBox="0 0 7 8" aria-hidden="true"><path d="M1.500 1L5 4 1.500 7" fill="none" stroke="#444" strokeWidth="1.700" /></svg></button>
            </div>
          </div>
        </section>
      </main>

      <div className="flex h-[57px] shrink-0">
        <div className="w-[2px] bg-[#f2f2f2]" />
        <div className="ml-[5px] flex w-[22px] shrink-0 flex-col items-center justify-between bg-linear-to-b from-[#858585] to-[#3e3e3e] pb-[5px] pt-[4px]">
          <svg width="18" height="7" viewBox="0 0 18 7" aria-hidden="true"><path d="M1 1.500h17M1 4h17M1 6.500h17" stroke="#a9a9a9" strokeDasharray="1 1.500" /></svg>
          <button type="button" aria-label="关闭"><svg width="10" height="10" viewBox="0 0 10 10" aria-hidden="true"><path d="M1 1l8 8M9 1L1 9" stroke="#f2f2f2" strokeWidth="2" /></svg></button>
          <button type="button" aria-label="自定义"><svg width="16" height="16" viewBox="0 0 16 16" aria-hidden="true"><path d="M2 1l3 3v2H3L1 4c0 3 2 5 5 4l6 6c2 1 3-1 2-2L8 6c1-3-2-6-6-5z" fill="#f2f2f2" /></svg></button>
        </div>
        <div className="flex min-w-0 flex-1 flex-col">
          <div className="h-[34px] bg-[#c8c8c8] pl-[2px] pt-[2px] font-['DejaVu_Sans_Mono','Noto_Sans_CJK_SC',monospace] text-xs leading-[14px] text-black">
            <p>命令: _saveas</p>
            <p>命令:</p>
          </div>
          <label className="flex h-[21px] items-center border-t border-[#888] bg-white pl-[5px]">
            <svg width="25" height="14" viewBox="0 0 25 14" aria-hidden="true">
              <rect x="0.500" y="0.500" width="14" height="13" fill="#dde1e8" stroke="#9aa0a8" />
              <path d="M3 4l4 3-4 3M8 10.500h4" fill="none" stroke="#445" strokeWidth="1.300" /><path d="M19 6h6l-3 3z" fill="#888" />
            </svg>
            <input aria-label="命令输入" placeholder="键入命令" className="ml-[6px] min-w-0 flex-1 bg-transparent font-['Noto_Sans_CJK_SC',sans-serif] text-[13px] italic leading-4 outline-none placeholder:text-[#999]" />
          </label>
        </div>
      </div>

      <footer className="flex h-[21px] shrink-0 border-t border-[#222] bg-linear-to-b from-[#707070] to-[#9a9a9a] text-black">
        <StatusButton label="推断约束" box="w-2 bg-[#b9e0ee]"><span className="h-[2px] w-[3px] bg-[#245]" /></StatusButton>
        <StatusButton label="栅格" box="w-[23px] bg-[#b9e4f5]">
          <Glyph><rect x="1.500" y="1.500" width="15" height="15" fill="#c7e6f8" stroke="#3c7ba6" strokeWidth="1.500" /><path d="M3 4h12M3 8h12M3 12h12" stroke="#77acd6" strokeWidth="2" strokeDasharray="2 2" /><path d="M5 6h11M5 10h11M5 14h11" stroke="#77acd6" strokeWidth="2" strokeDasharray="2 2" /></Glyph>
        </StatusButton>
        <StatusButton label="快捷特性" box="w-[21px] bg-[#b0b0b0]">
          <Glyph><rect x="5" y="4" width="8" height="10" fill="#f6f6f6" stroke="#222" /><path d="M6.500 6.500h1M8.500 6.500h3M6.500 9h1M8.500 9h3M6.500 11.500h1M8.500 11.500h3" stroke="#222" /></Glyph>
        </StatusButton>
        <StatusButton label="选择循环" box="w-[22px] bg-[#b0b0b0]">
          <Glyph><path d="M6.500 1.500h5v5h5v5h-5v5h-5v-5h-5v-5h5z" fill="#f2f2f2" stroke="#444" /></Glyph>
        </StatusButton>
        <div className="flex-1 border-r border-[#444]" />
        <StatusButton label="模型" box="w-[30px] bg-[#adadad]">模型</StatusButton>
        <StatusButton label="快速查看布局" box="w-[22px] bg-[#adadad]"><Glyph><rect x="3" y="3" width="11" height="10" fill="#f1f1f1" stroke="#444" /><path d="M6 5v6h6z" fill="none" stroke="#222" /><path d="M2 15.500h14" stroke="#444" /></Glyph></StatusButton>
        <StatusButton label="快速查看图形" box="w-[22px] bg-[#adadad]"><Glyph><path d="M1.500 3.500h7v6h-7zM9.500 3.500h7v6h-7z" fill="#f1f1f1" stroke="#444" /><path d="M2 12.500h14v2H2z" fill="#ccc" stroke="#444" /></Glyph></StatusButton>
        <div className="w-[18px] border-r border-[#555]" />
        <StatusButton label="注释比例" box="w-[54px] gap-px bg-[#adadad]">
          <Glyph><Scale /></Glyph>
          <span className="font-['Liberation_Mono',monospace]">1:1</span>
          <svg width="7" height="5" viewBox="0 0 7 5" aria-hidden="true"><path d="M0 0h7L3.500 5z" /></svg>
        </StatusButton>
        <StatusButton label="注释可见性" box="w-[22px] bg-[#adadad]"><Glyph><Scale /><circle cx="13" cy="11" r="3" fill="#ffd55b" stroke="#c88a18" /></Glyph></StatusButton>
        <StatusButton label="自动缩放" box="w-[22px] bg-[#a2a2a2]"><span className="flex opacity-40"><Glyph><Scale /><path d="M4 5l5-4-1 4h4l-5 4z" fill="#ddd" stroke="#555" /></Glyph></span></StatusButton>
        <div className="w-[5px]" />
        <StatusButton label="切换工作空间" box="w-[22px] bg-[#adadad]"><Glyph><circle cx="9" cy="9" r="7" fill="none" stroke="#444" strokeWidth="2" strokeDasharray="2.500 3" /><circle cx="9" cy="9" r="5.500" fill="#eee" stroke="#444" /><circle cx="9" cy="9" r="2.500" fill="#aaa" stroke="#444" /><Corner /></Glyph></StatusButton>
        <StatusButton label="锁定" box="w-[22px] bg-[#adadad]"><Glyph><path d="M6 8V4.500a3 3 0 0 1 6 0V8" fill="none" stroke="#333" strokeWidth="1.800" /><rect x="3.500" y="7.500" width="11" height="8.500" fill="#eee" stroke="#333" /><path d="M4 11h10M9 8v8" stroke="#777" /></Glyph></StatusButton>
        <StatusButton label="性能" box="w-[22px] bg-[#a5a5a5]"><Glyph><circle cx="9" cy="9" r="6" fill="#8c949a" stroke="#777" /><path d="M5 5l4 5 1-3" fill="none" stroke="#eee" strokeWidth="1.500" /></Glyph></StatusButton>
        <StatusButton label="硬件加速" box="w-[25px] border-l border-l-[#222] bg-[#bcbcbc]"><Glyph><rect x="2" y="8" width="12" height="7" fill="#f3ca43" stroke="#7a6010" /><path d="M3 3h10l2 5H3z" fill="#2f75aa" stroke="#123" /><path d="M8 13l3 3 6-7" fill="none" stroke="#2f9a2f" strokeWidth="2.500" /></Glyph></StatusButton>
        <StatusButton label="隔离对象" box="w-[23px] bg-[#bcbcbc]"><Glyph><circle cx="9" cy="6.500" r="4.500" fill="#ffe9a0" stroke="#a88632" /><path d="M7.500 11v5h3v-5z" fill="#eee" stroke="#555" /></Glyph></StatusButton>
        <StatusButton label="状态栏菜单" box="ml-1 w-4 bg-[#adadad]"><svg width="6" height="4" viewBox="0 0 6 4" aria-hidden="true"><path d="M0 0h6L3 4z" /></svg></StatusButton>
        <button type="button" aria-label="全屏显示" className="flex w-[7px] shrink-0 items-center overflow-hidden bg-[#adadad]"><span className="h-[13px] w-[7px] border border-t-2 border-r-0 border-[#345] bg-white" /></button>
      </footer>
    </div>
  );
}
